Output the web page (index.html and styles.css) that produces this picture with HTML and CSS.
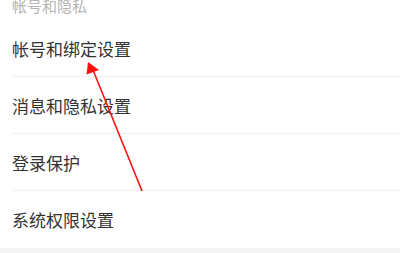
FILE: index.html
```html
<!DOCTYPE html>
<html>
    <head>
        <meta charset="utf-8">
        <title>设置</title>
        <link rel="stylesheet" href="styles.css">
    </head>
    <body>
        <div class="page">
            <div class="group-title">帐号和隐私</div>
            <ul class="list">
                <li class="item">帐号和绑定设置</li>
                <li class="item">消息和隐私设置</li>
                <li class="item">登录保护</li>
                <li class="item last">系统权限设置</li>
            </ul>
            <div class="gap"></div>
            <svg class="mark" width="400" height="253" viewBox="0 0 400 253">
                <line x1="142" y1="191" x2="93" y2="70" stroke="#ff1010" stroke-width="1.6"/>
                <polygon points="88,62 86.5,74.5 99,70" fill="#ff1010"/>
            </svg>
        </div>
    </body>
</html>
```

FILE: styles.css
```css
*{
    margin:0;
    padding:0;
    border:0;
}
body{
    background-color:#fff;
    font-family:"Noto Sans CJK SC","Noto Sans",sans-serif;
}
.page{
    width:400px;
    height:253px;
    position:relative;
    overflow:hidden;
}
.group-title{
    height:20px;
    line-height:12px;
    padding-left:12px;
    font-size:15px;
    color:#b4b4b4;
}
.list{
    list-style:none;
}
.item{
    height:56px;
    line-height:58px;
    margin-left:12px;
    font-size:17px;
    color:#333;
    border-bottom:1px solid #f0f0f0;
}
.item.last{
    border-bottom:0;
    height:57px;
}
.gap{
    height:6px;
    background-color:#f4f4f4;
}
.mark{
    position:absolute;
    top:0;
    left:0;
}
```
